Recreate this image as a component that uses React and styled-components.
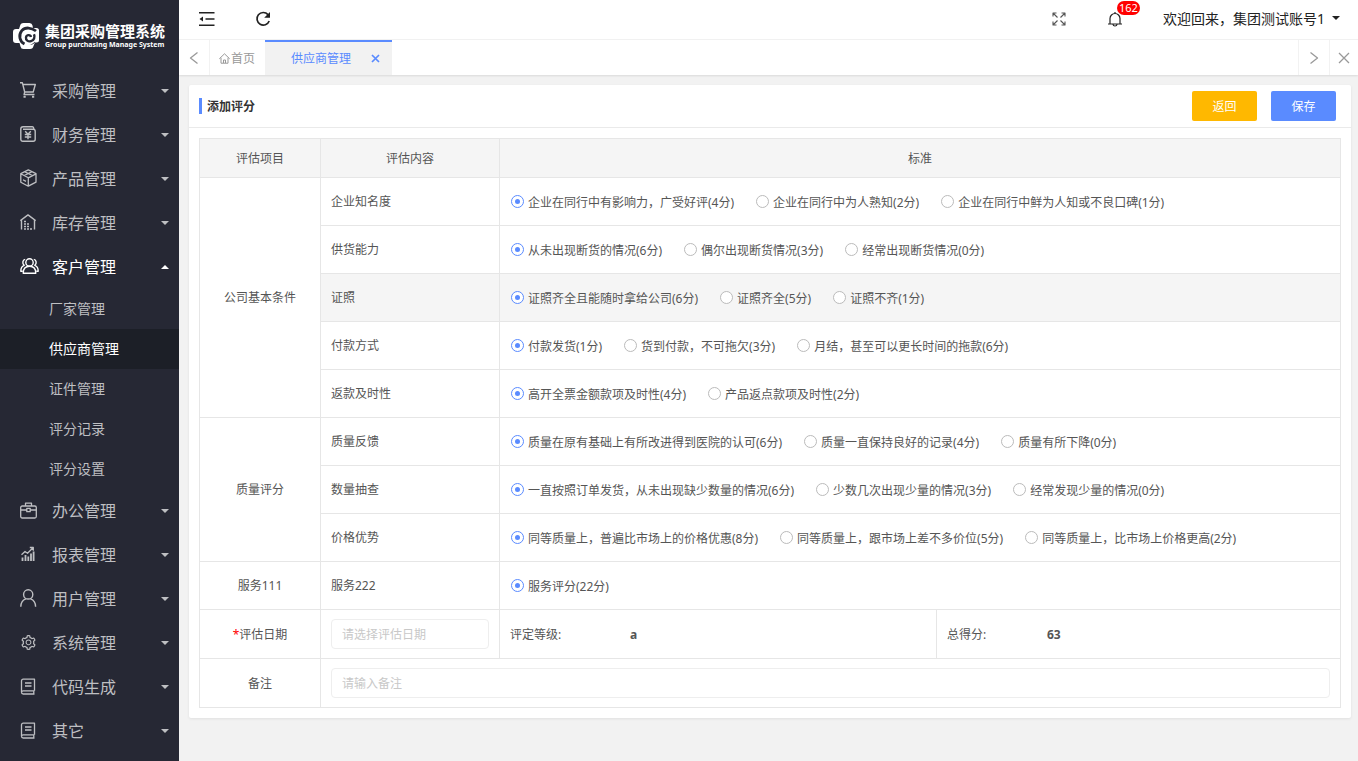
import React, { useState } from "react";
import styled, { createGlobalStyle, css } from "styled-components";
import { AiOutlineSetting } from "react-icons/ai";

const GlobalStyle = createGlobalStyle`
  *, *::before, *::after { box-sizing: border-box; }
  body {
    margin: 0;
    background: #f2f2f2;
    color: #555;
    font: 12px/18px "Noto Sans", "Noto Sans CJK SC", sans-serif;
  }
  button, input { font: inherit; color: inherit; }
  button { border: 0; padding: 0; background: none; cursor: pointer; }
  a { color: inherit; text-decoration: none; }
  ul { list-style: none; margin: 0; padding: 0; }
  h1, h2 { margin: 0; font-size: inherit; }
  svg { display: block; flex: none; }
`;

const Shell = styled.div`
  display: flex;
  min-height: 100vh;
`;

const Sidebar = styled.aside`
  flex: none;
  width: 179px;
  background: #262834;
  color: #bebfc2;
`;

const Brand = styled.div`
  display: flex;
  align-items: center;
  gap: 6px;
  height: 69px;
  padding: 2px 0 0 13px;
  color: #fff;
`;

const BrandName = styled.h1`
  font-size: 15px;
  line-height: 18px;
  font-weight: 700;
  white-space: nowrap;
`;

const BrandSub = styled.div`
  font-size: 7px;
  line-height: 10px;
  font-weight: 700;
  white-space: nowrap;
`;

const MenuLink = styled.a`
  display: flex;
  align-items: center;
  height: 44px;
  padding: 0 10px 0 20px;
  font-size: 16px;
  color: ${(p) => (p.$open ? "#fff" : "inherit")};
`;

const MenuIcon = styled.span`
  width: 32px;
  padding-bottom: 2px;
`;

const Caret = styled.i`
  margin-left: auto;
  margin-bottom: 1px;
  border: 4px solid transparent;
  ${(p) =>
    p.$up
      ? css`border-top: 0; border-bottom-color: currentColor;`
      : css`border-bottom: 0; border-top-color: currentColor;`}
`;

const SubLink = styled.a`
  display: flex;
  align-items: center;
  height: 40px;
  padding-left: 49px;
  font-size: 14px;
  color: ${(p) => (p.$active ? "#fff" : "inherit")};
  background: ${(p) => (p.$active ? "#1c1f27" : "transparent")};
`;

const Main = styled.div`
  flex: 1;
  min-width: 0;
`;

const TopBar = styled.header`
  display: flex;
  align-items: center;
  justify-content: space-between;
  height: 40px;
  padding: 0 18px 2px 20px;
  background: #fff;
  border-bottom: 1px solid #f2f2f2;
  color: #222;
`;

const Tools = styled.div`
  display: flex;
  align-items: center;
  gap: ${(p) => p.$gap}px;
`;

const BellButton = styled.button`
  position: relative;
`;

const Badge = styled.span`
  position: absolute;
  left: 10px;
  top: -10px;
  padding: 0 2px;
  border-radius: 7px;
  background: #f00;
  color: #fff;
  font-size: 11px;
  line-height: 14px;
`;

const Account = styled.button`
  display: flex;
  align-items: center;
  gap: 7px;
  font-size: 14px;
  white-space: nowrap;
`;

const TabBar = styled.nav`
  display: flex;
  height: 35px;
  background: #fff;
  box-shadow: 0 1px 2px rgba(0, 0, 0, 0.1);
  color: #999;
`;

const TabControl = styled.button`
  display: grid;
  place-items: center;
  width: ${(p) => p.$w || 31}px;
  border: solid #f2f2f2;
  border-width: ${(p) => (p.$end ? "0 0 0 1px" : "0 1px 0 0")};
`;

const HomeTab = styled.a`
  display: flex;
  align-items: center;
  gap: 1px;
  width: 55px;
  padding: 2px 0 0 9px;
`;

const ActiveTab = styled.div`
  display: flex;
  align-items: center;
  justify-content: space-between;
  width: 127px;
  padding: 2px 11px 0 26px;
  margin-right: auto;
  background: #f2f2f2;
  box-shadow: inset 0 2px #5a8bff;
  color: #5a8bff;
`;

const Card = styled.main`
  margin: 10px 7px 10px 10px;
  background: #fff;
  border-radius: 2px;
  box-shadow: 0 1px 3px rgba(0, 0, 0, 0.08);
`;

const CardHead = styled.div`
  display: flex;
  align-items: center;
  gap: 14px;
  height: 43px;
  padding: 0 15px 0 10px;
  border-bottom: 1px solid #eaeaea;
`;

const Title = styled.h2`
  flex: 1;
  height: 16px;
  padding-left: 5px;
  border-left: 3px solid #5a8bff;
  line-height: 18px;
  color: #333;
`;

const ActionButton = styled.button`
  width: 65px;
  height: 30px;
  padding-top: 2px;
  border-radius: 2px;
  color: #fff;
  background: ${(p) => (p.$warm ? "#ffb800" : "#5a8bff")};
`;

const CardBody = styled.div`
  padding: 10px;
`;

const ScoreTable = styled.table`
  width: 100%;
  table-layout: fixed;
  border-collapse: collapse;
`;

const Col = styled.col`
  width: ${(p) => p.$w}px;
`;

const HeadCell = styled.th`
  height: 39px;
  padding: 2px 0 0;
  border: 1px solid #e6e6e6;
  background: #f5f5f5;
  font-weight: 400;
`;

const Row = styled.tr`
  height: ${(p) => (p.$tall ? 49 : 48)}px;
`;

const Cell = styled.td`
  padding: 0 10px;
  border: 1px solid #e6e6e6;
  text-align: ${(p) => (p.$center ? "center" : "left")};
  background: ${(p) => (p.$lit ? "#f5f5f5" : "transparent")};
`;

const TextCell = styled(Cell)`
  padding-top: 2px;
`;

const Options = styled.div`
  display: flex;
  flex-wrap: wrap;
  gap: 22px;
  padding-left: 1px;
`;

const Option = styled.label`
  display: flex;
  align-items: center;
  gap: 4px;
  padding-top: 2px;
  white-space: nowrap;
  cursor: pointer;
`;

const Radio = styled.input.attrs({ type: "radio" })`
  appearance: none;
  display: grid;
  place-items: center;
  width: 13px;
  height: 13px;
  margin: 0 0 2px;
  border: 1px solid #bbb;
  border-radius: 50%;
  background: #fff;
  &:checked { border-color: #5a8bff; }
  &:checked::before {
    content: "";
    width: 5px;
    height: 5px;
    border-radius: 50%;
    background: #5a8bff;
  }
`;

const Field = styled.input`
  display: block;
  width: 100%;
  height: 30px;
  padding: 0 10px;
  border: 1px solid #eee;
  border-radius: 4px;
  background: #fff;
  &::placeholder { color: #c8c8c8; opacity: 1; }
`;

const Required = styled.span`
  color: #f00;
`;

const Summary = styled.div`
  display: flex;
`;

const SummaryLabel = styled.span`
  width: ${(p) => p.$w}px;
`;

function Line({ size = 16, box = 16, w = 1.4, children }) {
  return (
    <svg width={size} height={size} viewBox={`0 0 ${box} ${box}`} fill="none"
      stroke="currentColor" strokeWidth={w} strokeLinejoin="round" aria-hidden="true">
      {children}
    </svg>
  );
}

const icons = {
  cart: (
    <Line>
      <path d="M0 .8h2.4l2.3 9.2h8.5L15.300 2.500H3M4.700 10l-.6 2.500h10.400" />
      <path d="M3.500 14.800h2.200M12 14.800h2.200" strokeWidth="2" />
    </Line>
  ),
  money: (
    <Line>
      <path d="M3 3.200h10.200c1.200 0 2 .8 2 2v8c0 1.200-.8 2-2 2H2.800c-1.200 0-2-.8-2-2V3C.8 1.500 1.600.8 3 .8h9.500c.8 0 1.200.5 1.500 2.200" />
      <path d="M5.200 5.300 8 8.300l2.800-3M8 8.300v5M4.800 8.500h6.400M4.800 11h6.400" />
    </Line>
  ),
  box: (
    <Line size={18} box={18} w={1.300}>
      <path d="M8.300.8 16 4.600v8.600l-7.700 4-7.500-4V4.600zM.8 4.800l7.500 4L16 4.800M8.300 8.800v8.400M4.300 6.500l7.800-3.800M12.300 6.500 4.500 2.700M3 10.800l3 1.600" />
    </Line>
  ),
  house: (
    <Line>
      <path d="M.3 6.700 8 .9l7.700 5.800M1.500 6v9.500M14.500 6v9.500" />
      <path d="M4 7.500h2M4 10h2M7 10h2M4 12.500h2M7 12.500h2M4 15h2M7 15h2M10 15h2" strokeWidth="1.700" />
    </Line>
  ),
  people: (
    <Line size={19} box={19} w={1.400}>
      <circle cx="9.500" cy="5.500" r="3.700" />
      <path d="M3.200 16.300c0-4.500 2.300-7 6.300-7s6.300 2.500 6.300 7zM5.200 2.400C2.500 2.800 2 6.500 4.200 8.300 2 9 .8 11 .8 14.300H2.500M13.800 2.400c2.700.4 3.200 4.100 1 5.900 2.200.7 3.400 2.700 3.400 6h-1.700" />
    </Line>
  ),
  briefcase: (
    <Line size={17} box={17} w={1.300}>
      <rect x=".7" y="4" width="15.600" height="12" rx="1.500" />
      <path d="M5.500 4V1.200h6V4M.7 8h6M10.300 8h6M6.800 6.300h3.400v3.400H6.800z" />
    </Line>
  ),
  chart: (
    <Line w={1.300}>
      <path d="M1.500 8.800 5 5.500l2.500 1.800 5-5M9.800 1.500h3.500v3.300" />
      <path d="M2.500 15v-3.500M5.500 15V9M8.300 15v-4.500M11 15V7.500M13.600 15V5.500" strokeWidth="1.800" />
    </Line>
  ),
  user: (
    <Line size={18} box={18} w={1.400}>
      <circle cx="8.200" cy="5.400" r="4.600" />
      <path d="M.8 17.800c0-4.200 1.800-6.700 5-7.900M15.600 17.800c0-4.200-1.800-6.700-5-7.900" />
    </Line>
  ),
  gear: <AiOutlineSetting size={17} />,
  book: (
    <Line size={17} box={17} w={1.300}>
      <path d="M14.500 12.800V1.200H3.200c-1 0-1.700.7-1.700 1.700v11.400c0-1 .7-1.500 1.700-1.500h11.300M1.500 14.300c0 1 .7 1.700 1.700 1.700h11.300M13.800 12.800V16M5 5h6.500M5 8h6.500" />
    </Line>
  ),
};

const Logo = () => (
  <svg width="26" height="26" viewBox="0 0 26 26" aria-hidden="true">
    <path fill="#fff" d="M7 3q.5-3 3.500-3h6Q19 0 19.500 2.500L20 5h3.500Q26 5 26 7.500V17q0 2.500-2.500 2.500H22L20.500 23q-.5 3-3.500 3h-6.500Q8 26 7.500 23.500L6.500 20H3q-3 0-3-3V9q0-3 3-3h3z" />
    <path fill="none" stroke="#262834" strokeWidth="2.800" d="M23 8C18.500 4.200 12 4 8.800 7.600 5.200 12 6.500 18.500 11.500 21" />
    <path fill="none" stroke="#262834" strokeWidth="2.400" d="M18 14c-.5-2.500-4.500-2.500-5 .4-.4 2.800 2.200 4.600 5 3.800 3-.8 4.300-4 3-7" />
    <path fill="#262834" d="M22 19.500c-1.500 1.800-3.500 2.500-5.500 2.300 2-.3 3.800-1.300 5-3z" />
  </svg>
);

const menu = [
  { name: "采购管理", icon: "cart" },
  { name: "财务管理", icon: "money" },
  { name: "产品管理", icon: "box" },
  { name: "库存管理", icon: "house" },
  { name: "客户管理", icon: "people", children: ["厂家管理", "供应商管理", "证件管理", "评分记录", "评分设置"] },
  { name: "办公管理", icon: "briefcase" },
  { name: "报表管理", icon: "chart" },
  { name: "用户管理", icon: "user" },
  { name: "系统管理", icon: "gear" },
  { name: "代码生成", icon: "book" },
  { name: "其它", icon: "book" },
];

const groups = [
  {
    name: "公司基本条件",
    rows: [
      ["企业知名度", ["企业在同行中有影响力，广受好评(4分)", "企业在同行中为人熟知(2分)", "企业在同行中鲜为人知或不良口碑(1分)"]],
      ["供货能力", ["从未出现断货的情况(6分)", "偶尔出现断货情况(3分)", "经常出现断货情况(0分)"]],
      ["证照", ["证照齐全且能随时拿给公司(6分)", "证照齐全(5分)", "证照不齐(1分)"]],
      ["付款方式", ["付款发货(1分)", "货到付款，不可拖欠(3分)", "月结，甚至可以更长时间的拖款(6分)"]],
      ["返款及时性", ["高开全票金额款项及时性(4分)", "产品返点款项及时性(2分)"]],
    ],
  },
  {
    name: "质量评分",
    rows: [
      ["质量反馈", ["质量在原有基础上有所改进得到医院的认可(6分)", "质量一直保持良好的记录(4分)", "质量有所下降(0分)"]],
      ["数量抽查", ["一直按照订单发货，从未出现缺少数量的情况(6分)", "少数几次出现少量的情况(3分)", "经常发现少量的情况(0分)"]],
      ["价格优势", ["同等质量上，普遍比市场上的价格优惠(8分)", "同等质量上，跟市场上差不多价位(5分)", "同等质量上，比市场上价格更高(2分)"]],
    ],
  },
  { name: "服务111", rows: [["服务222", ["服务评分(22分)"]]] },
];

function SideMenu() {
  return (
    <nav>
      <ul>
        {menu.map((m) => (
          <li key={m.name}>
            <MenuLink href="#" $open={!!m.children}>
              <MenuIcon>{icons[m.icon]}</MenuIcon>
              {m.name}
              <Caret $up={!!m.children} />
            </MenuLink>
            {m.children && (
              <ul>
                {m.children.map((c) => (
                  <li key={c}>
                    <SubLink href="#" $active={c === "供应商管理"}>{c}</SubLink>
                  </li>
                ))}
              </ul>
            )}
          </li>
        ))}
      </ul>
    </nav>
  );
}

function ScoreRow({ group, row, first, lit }) {
  const [name, options] = row;
  const [picked, setPicked] = useState(0);
  return (
    <Row>
      {first && <Cell $center rowSpan={group.rows.length}>{group.name}</Cell>}
      <Cell $lit={lit}>{name}</Cell>
      <Cell $lit={lit} colSpan={2}>
        <Options role="radiogroup" aria-label={name}>
          {options.map((o, i) => (
            <Option key={o}>
              <Radio name={name} checked={picked === i} onChange={() => setPicked(i)} />
              {o}
            </Option>
          ))}
        </Options>
      </Cell>
    </Row>
  );
}

export default function App() {
  return (
    <Shell>
      <GlobalStyle />
      <Sidebar>
        <Brand>
          <Logo />
          <div>
            <BrandName>集团采购管理系统</BrandName>
            <BrandSub>Group purchasing Manage System</BrandSub>
          </div>
        </Brand>
        <SideMenu />
      </Sidebar>
      <Main>
        <TopBar>
          <Tools $gap={40}>
            <button aria-label="收起菜单">
              <Line w={1.500}>
                <path d="M0 1.800h15.500M6.500 8h9M0 14.200h15.500" />
                <path d="M.5 8 4 5.500v5z" fill="currentColor" stroke="none" />
              </Line>
            </button>
            <button aria-label="刷新">
              <Line w={1.700}>
                <path d="M13 3.600A6.300 6.300 0 1 0 14.200 10" />
                <path d="M15 1v5.800H9.200z" fill="currentColor" stroke="none" />
              </Line>
            </button>
          </Tools>
          <Tools $gap={40}>
            <button aria-label="全屏">
              <Line w={1.100}>
                <path d="M2 5.500V2h3.500M2 2l4.500 4.500M10.500 2H14v3.500M14 2 9.500 6.500M2 10.500V14h3.500M2 14l4.500-4.500M14 10.500V14h-3.500M14 14 9.500 9.500" stroke="#555" />
              </Line>
            </button>
            <BellButton aria-label="消息">
              <Line w={1.200}>
                <path d="M1 13h14M3 13V7.500a5 5 0 0 1 10 0V13M8 2.500V1M6 13.500c.3 2 3.700 2 4 0" />
              </Line>
              <Badge>162</Badge>
            </BellButton>
            <Account>
              欢迎回来，集团测试账号1
              <Caret />
            </Account>
          </Tools>
        </TopBar>
        <TabBar>
          <TabControl aria-label="向左">
            <Line w={1.300}><path d="M11.500 2.500 4.500 8l7 5.500" /></Line>
          </TabControl>
          <HomeTab href="#">
            <Line size={11} box={11} w={1}>
              <path d="M.3 5.800 5.500.8l5.200 5M2 4.800v5.400h7V4.800M4.500 10V7h2v3" />
            </Line>
            首页
          </HomeTab>
          <ActiveTab>
            <a href="#">供应商管理</a>
            <button aria-label="关闭标签">
              <Line size={11} box={11} w={1.700}><path d="m2 2 7 7M9 2 2 9" /></Line>
            </button>
          </ActiveTab>
          <TabControl $end aria-label="向右">
            <Line w={1.300}><path d="m4.500 2.500 7 5.500-7 5.500" /></Line>
          </TabControl>
          <TabControl $end $w={29} aria-label="关闭">
            <Line w={1.300}><path d="m3 3 10 10M13 3 3 13" /></Line>
          </TabControl>
        </TabBar>
        <Card>
          <CardHead>
            <Title>添加评分</Title>
            <ActionButton $warm>返回</ActionButton>
            <ActionButton>保存</ActionButton>
          </CardHead>
          <CardBody>
            <ScoreTable>
              <colgroup>
                <Col $w={121} />
                <Col $w={179} />
                <Col $w={437} />
                <col />
              </colgroup>
              <thead>
                <tr>
                  <HeadCell>评估项目</HeadCell>
                  <HeadCell>评估内容</HeadCell>
                  <HeadCell colSpan={2}>标准</HeadCell>
                </tr>
              </thead>
              <tbody>
                {groups.map((g) =>
                  g.rows.map((r, i) => (
                    <ScoreRow key={r[0]} group={g} row={r} first={i === 0} lit={r[0] === "证照"} />
                  ))
                )}
                <Row $tall>
                  <TextCell $center>
                    <label htmlFor="date"><Required>*</Required>评估日期</label>
                  </TextCell>
                  <Cell><Field id="date" placeholder="请选择评估日期" /></Cell>
                  <TextCell>
                    <Summary><SummaryLabel $w={120}>评定等级:</SummaryLabel><b>a</b></Summary>
                  </TextCell>
                  <TextCell>
                    <Summary><SummaryLabel $w={100}>总得分:</SummaryLabel><b>63</b></Summary>
                  </TextCell>
                </Row>
                <Row $tall>
                  <TextCell $center><label htmlFor="remark">备注</label></TextCell>
                  <Cell colSpan={3}><Field id="remark" placeholder="请输入备注" /></Cell>
                </Row>
              </tbody>
            </ScoreTable>
          </CardBody>
        </Card>
      </Main>
    </Shell>
  );
}
